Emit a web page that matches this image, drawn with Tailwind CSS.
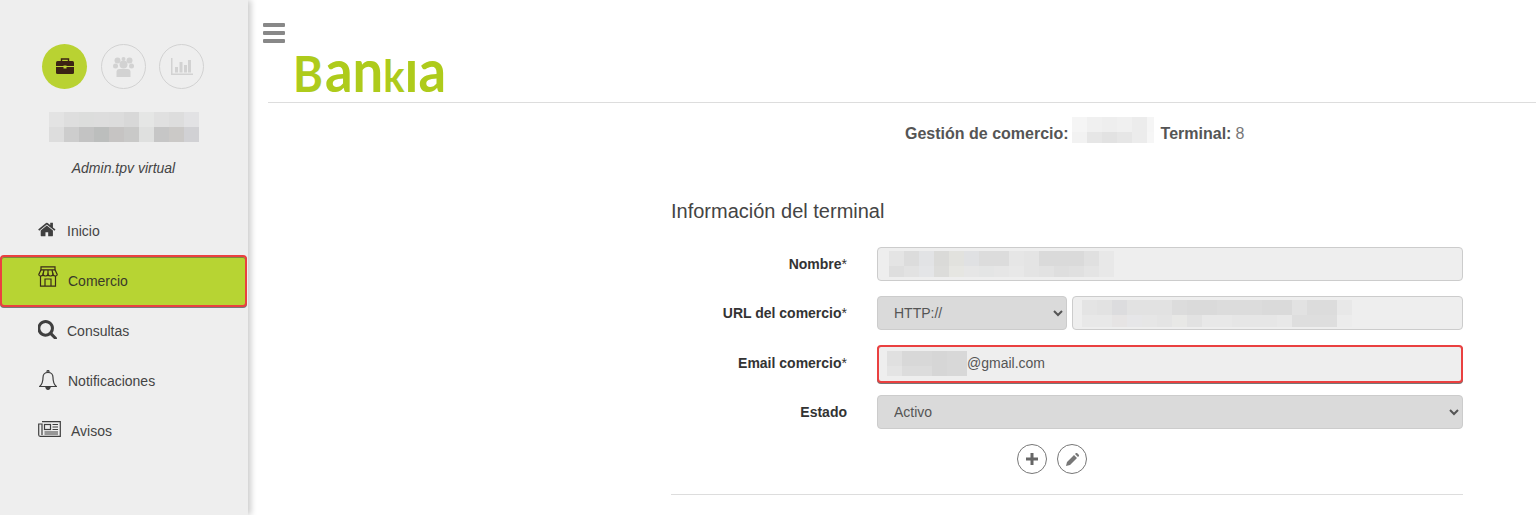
<!DOCTYPE html>
<html lang="es">
<head>
    <meta charset="UTF-8">
    <title>Bankia - Terminal</title>
    <script src="https://cdn.jsdelivr.net/npm/@tailwindcss/browser@4"></script>
</head>
<body class="bg-white font-['Liberation_Sans',Arial,sans-serif] text-sm text-[#555]">
    <div class="flex h-[515px] overflow-hidden">
        <!-- Sidebar -->
        <aside class="w-[248px] shrink-0 bg-[#eeeeee] shadow-[3px_0_6px_rgba(0,0,0,0.2)] z-10">
            <div class="flex pl-[42px] pt-[44px]">
                <div class="w-[45px] h-[45px] rounded-full bg-[#b9d232] flex items-center justify-center">
                    <svg class="w-[20px] h-[17px]" viewBox="0 0 20 17">
                        <path d="M6.5 3V1h7v2" fill="none" stroke="#3b2314" stroke-width="1.4"/>
                        <rect x="1" y="3" width="18" height="13" rx="1.5" fill="#3b2314"/>
                        <path d="M1 8.5h18" stroke="#b9d232" stroke-width="1"/>
                        <rect x="8.5" y="7.5" width="3" height="3" fill="#b9d232"/>
                    </svg>
                </div>
                <div class="ml-[14px] w-[45px] h-[45px] rounded-full border border-[#d2d2d2] flex items-center justify-center">
                    <svg class="w-[21px] h-[20px]" viewBox="0 0 21 20" fill="#d2d2d2">
                        <circle cx="10.5" cy="7.5" r="4"/>
                        <circle cx="4.5" cy="3.5" r="3"/>
                        <circle cx="10.5" cy="2" r="2"/>
                        <circle cx="16.5" cy="3.5" r="3"/>
                        <circle cx="2.5" cy="9" r="2.5"/>
                        <circle cx="18.5" cy="9" r="2.5"/>
                        <path d="M3.5 20v-5q0-3 3-3h8q3 0 3 3v5z"/>
                    </svg>
                </div>
                <div class="ml-[13px] w-[45px] h-[45px] rounded-full border border-[#d2d2d2] flex items-center justify-center">
                    <svg class="w-[22px] h-[17px]" viewBox="0 0 22 17" fill="#d2d2d2">
                        <rect x="0" y="0" width="1.5" height="17"/>
                        <rect x="0" y="15.5" width="22" height="1.5"/>
                        <rect x="4" y="9" width="3" height="5.5"/>
                        <rect x="8.500" y="4" width="3" height="10.500"/>
                        <rect x="13" y="7" width="3" height="7.500"/>
                        <rect x="17" y="2" width="3" height="12.500"/>
                    </svg>
                </div>
            </div>
            <div data-blur="e3e3e3,dedede,dcdddc,dddddd,dcdcdc,d8d8d8,e5e6e5,e0e0e0,dddddd,e2e2e4|dddddd,cdcdcd,c3c3c3,bcbebd,c6c4c3,c9c9c8,dfe0df,c6c6c6,cbc9c7,d1d1d4" class="ml-[49px] mt-[23px] w-[150px] h-[30px]"></div>
            <p class="mt-[16px] text-center pr-[1px] italic leading-5 text-[#444]">Admin.tpv virtual</p>

            <nav class="mt-[28px] text-[#444]">
                <a class="flex items-center h-[50px] pl-[38px]">
                    <svg class="w-[19px] h-[19px] mb-[4px]" viewBox="0 0 1792 1792" fill="#3f3f3f"><path d="M1408 992v480q0 26-19 45t-45 19h-384v-384h-256v384h-384q-26 0-45-19t-19-45v-480q0-1 .5-3t.5-3l575-474 575 474q1 2 1 6zm223-69l-62 74q-8 9-21 11h-3q-13 0-21-7l-692-577-692 577q-12 8-24 7-13-2-21-11l-62-74q-8-10-7-23.5t11-21.5l719-599q32-26 76-26t76 26l244 204v-195q0-14 9-23t23-9h192q14 0 23 9t9 23v408l219 182q10 8 11 21.5t-7 23.5z"/></svg>
                    <span class="ml-[10px]">Inicio</span>
                </a>
                <a class="flex items-center h-[52px] -my-px w-[247px] pl-[36px] bg-[#b7d433] border-2 border-[#ea4040] rounded-[4px] shadow-[inset_0_1px_0_#7d8a3c,0_1px_0_#777] text-[#3a3a2a]">
                    <svg class="w-[20px] h-[21px] mb-[10px]" viewBox="0 0 20 21" fill="none" stroke="#3a2a1a" stroke-width="1.2">
                        <path d="M3 .8h14v3H3z"/>
                        <path d="M3 3.800 .8 8.500q0 1.500 1.900 1.500t2.300-1.500q.4 1.500 2.500 1.500t2.500-1.500q.4 1.500 2.500 1.500t2.500-1.500q.4 1.500 2.300 1.500t1.900-1.500L17 3.800"/>
                        <path d="M6 4 5 8.500M10 4v4.500M14 4l1 4.500"/>
                        <path d="M2.500 10v10.200h15V10M7 20V13h6v7"/>
                    </svg>
                    <span class="ml-[10px]">Comercio</span>
                </a>
                <a class="flex items-center h-[50px] pl-[38px]">
                    <svg class="w-[19px] h-[19px] mb-[4px]" viewBox="128 128 1600 1600" fill="#3f3f3f"><path d="M1216 832q0-185-131.500-316.500t-316.500-131.500-316.500 131.500-131.500 316.500 131.500 316.500 316.500 131.500 316.500-131.500 131.500-316.500zm512 832q0 52-38 90t-90 38q-54 0-90-38l-343-342q-179 124-399 124-143 0-273.500-55.500t-225-150-150-225-55.500-273.500 55.500-273.500 150-225 225-150 273.500-55.500 273.500 55.500 225 150 150 225 55.500 273.500q0 220-124 399l343 343q37 37 37 90z"/></svg>
                    <span class="ml-[10px]">Consultas</span>
                </a>
                <a class="flex items-center h-[50px] pl-[39px]">
                    <svg class="w-[18px] h-[20px] mb-[2px]" viewBox="0 0 18 20" fill="none" stroke="#3f3f3f" stroke-width="1.2">
                        <path d="M9 2.500q-5 0-5 5 0 6-3.300 9h16.600q-3.300-3-3.300-9 0-5-5-5z"/>
                        <circle cx="9" cy="1.500" r="1"/>
                        <path d="M6.800 16.800q.5 2.500 2.200 2.500t2.200-2.500z" fill="#3f3f3f"/>
                    </svg>
                    <span class="ml-[11px]">Notificaciones</span>
                </a>
                <a class="flex items-center h-[50px] pl-[38px]">
                    <svg class="w-[23px] h-[16px] mb-[5px]" viewBox="0 0 23 16" fill="none" stroke="#3f3f3f" stroke-width="1.200">
                        <path d="M4 .7h18.300v14.600H2.200q-1.500 0-1.500-1.500V3h3.300v11"/>
                        <rect x="6.500" y="3.500" width="6" height="5"/>
                        <path d="M14.500 3.500h5.500M14.500 6h5.500M14.500 8.500h5.500M6.500 11h13.500M6.500 13h13.500"/>
                    </svg>
                    <span class="ml-[10px]">Avisos</span>
                </a>
            </nav>
        </aside>

        <!-- Main -->
        <main class="flex-1 min-w-0">
            <header class="ml-[20px] h-[103px] border-b border-[#dddddd]">
                <div class="-ml-[5px] pt-[23px] w-[22px] flex flex-col gap-[4px]">
                    <span class="h-[4px] rounded-[1px] bg-[#888888]"></span>
                    <span class="h-[4px] rounded-[1px] bg-[#888888]"></span>
                    <span class="h-[4px] rounded-[1px] bg-[#888888]"></span>
                </div>
                <svg class="ml-[25px] mt-[11px] w-[153px] h-[38px] overflow-visible" viewBox="0 0 153 38" fill="#aecb1b" font-family="Lato, sans-serif" font-weight="700">
                    <text x="0" y="37.500" font-size="50" textLength="30" lengthAdjust="spacingAndGlyphs">B</text>
                    <text x="32" y="37.500" font-size="60" textLength="121" lengthAdjust="spacingAndGlyphs">an<tspan font-size="44">k</tspan>ıa</text>
                </svg>
            </header>

            <div class="flex items-center h-[26px] mt-[14px] pl-[657px] text-base">
                <strong class="pt-[8px] font-bold">Gestión de comercio:</strong>
                <div data-blur="f5f5f5,f0f0f0,eeeeee,f0f0f0,ececec,f5f5f5|f2f2f2,e6e6e6,e2e2e2,e6e6e6,ececec,f6f6f6" class="ml-[3px] w-[82px] h-[26px]"></div>
                <strong class="pt-[8px] ml-[7px] font-bold">Terminal:</strong>
                <span class="pt-[8px] ml-[4px] text-[#777]">8</span>
            </div>

            <section class="ml-[423px] w-[792px]">
                <h2 class="mt-[54px] text-xl leading-7 text-[#444]">Información del terminal</h2>

                <form class="mt-[22px] flex flex-col">
                    <div class="flex items-center">
                        <label class="w-[176px] text-right font-bold text-[#333]">Nombre<span class="font-normal">*</span></label>
                        <div class="ml-[30px] flex-1 h-[34px] bg-[#eeeeee] border border-[#cccccc] rounded-[4px] pl-[11px] flex items-center">
                            <div data-blur="e4e4e4,dcdcdc,e2e3e5,dadad8,e2e2de,e0e1e3,dcdcdc,dcdcdc,e6e6e6,e4e4e4,dadada,dadada,dadada,e0e0e0,e8e8e8|dedede,e2e2e2,e4e5e7,dcdcda,e6e6e2,e6e6e6,e4e5e5,e6e6e6,e8e8e8,e4e4e4,e2e2e2,dedede,e0e0e0,e4e4e4,e8e8e8" class="w-[225px] h-[26px]"></div>
                        </div>
                    </div>

                    <div class="flex items-center mt-[15px]">
                        <label class="w-[176px] text-right font-bold text-[#333]">URL del comercio<span class="font-normal">*</span></label>
                        <select class="ml-[30px] w-[190px] h-[34px] bg-[#dadada] border border-[#cccccc] rounded-[4px] pl-[12px] pr-[4px] text-[#555]">
                            <option>HTTP://</option>
                        </select>
                        <div class="ml-[5px] flex-1 h-[34px] bg-[#eeeeee] border border-[#cccccc] rounded-[4px] pl-[9px] flex items-center">
                            <div data-blur="e4e4e4,e2e2e2,dcdcde,e2e2e2,e2e2e2,e2e2e2,dcdcdc,dadada,dadada,dcdcdc,dcdcdc,dcdcdc,dadada,dadada,e2e2e2,dcdcdc,dcdcdc,e8e8e8|e8e8e8,e8e8e8,e6e4e4,e6e6e8,e6e6e6,e4e4e4,e8e8e6,e2e2e2,e8e8e8,e8e8e8,e6e6e6,e6e6e6,e6e6e6,e8e8e8,dedede,dedede,dedede,ececec" class="w-[270px] h-[27px]"></div>
                        </div>
                    </div>

                    <div class="flex items-center mt-[15px]">
                        <label class="pb-[2px] w-[176px] text-right font-bold text-[#333]">Email comercio<span class="font-normal">*</span></label>
                        <div class="ml-[30px] flex-1 h-[38px] bg-[#eeeeee] border-2 border-[#ea4040] rounded-[4px] pl-[8px] pb-[2px] flex items-center shadow-[0_1px_0_#777]">
                            <div data-blur="e0e0e0,d8d8d8,d8d8d8,d6d6d6,d8d8d8,d8d8d8|e4e4e4,dcdcdc,dcdcdc,d6d6d6,d8d8d8,d8d8d8" class="w-[80px] h-[25px]"></div>
                            <span>@gmail.com</span>
                        </div>
                    </div>

                    <div class="flex items-center mt-[12px]">
                        <label class="w-[176px] text-right font-bold text-[#333]">Estado</label>
                        <select class="ml-[30px] flex-1 h-[34px] bg-[#dadada] border border-[#cccccc] rounded-[4px] pl-[12px] pr-[4px] text-[#555]">
                            <option>Activo</option>
                        </select>
                    </div>

                    <div class="flex gap-[10px] mt-[15px] ml-[346px]">
                        <button type="button" class="w-[30px] h-[30px] rounded-full bg-white border border-[#777] flex items-center justify-center">
                            <svg class="w-[12px] h-[12px]" viewBox="0 0 12 12" fill="#666"><path d="M4.500 0h3v4.500H12v3H7.500V12h-3V7.500H0v-3h4.500z"/></svg>
                        </button>
                        <button type="button" class="w-[30px] h-[30px] rounded-full bg-white border border-[#777] flex items-center justify-center">
                            <svg class="w-[13px] h-[13px]" viewBox="0 0 13 13" fill="#777"><path d="M0 13l1-4 7-7 3 3-7 7zM9 1l1-1q.5-.3 1 0l2 2q.3.5 0 1l-1 1z"/></svg>
                        </button>
                    </div>

                    <hr class="mt-[20px] border-[#dddddd]">
                </form>
            </section>
        </main>
    </div>

    <script>
        // Pixelated patches hiding private data
        document.querySelectorAll('[data-blur]').forEach((el) => {
            el.classList.add('overflow-hidden');
            el.dataset.blur.split('|').forEach((row) => {
                const line = document.createElement('div');
                line.style.display = 'flex';
                line.style.height = '15px';
                row.split(',').forEach((colour) => {
                    const cell = document.createElement('div');
                    cell.style.flex = '0 0 15px';
                    cell.style.background = '#' + colour;
                    line.appendChild(cell);
                });
                el.appendChild(line);
            });
        });
    </script>
</body>
</html>
